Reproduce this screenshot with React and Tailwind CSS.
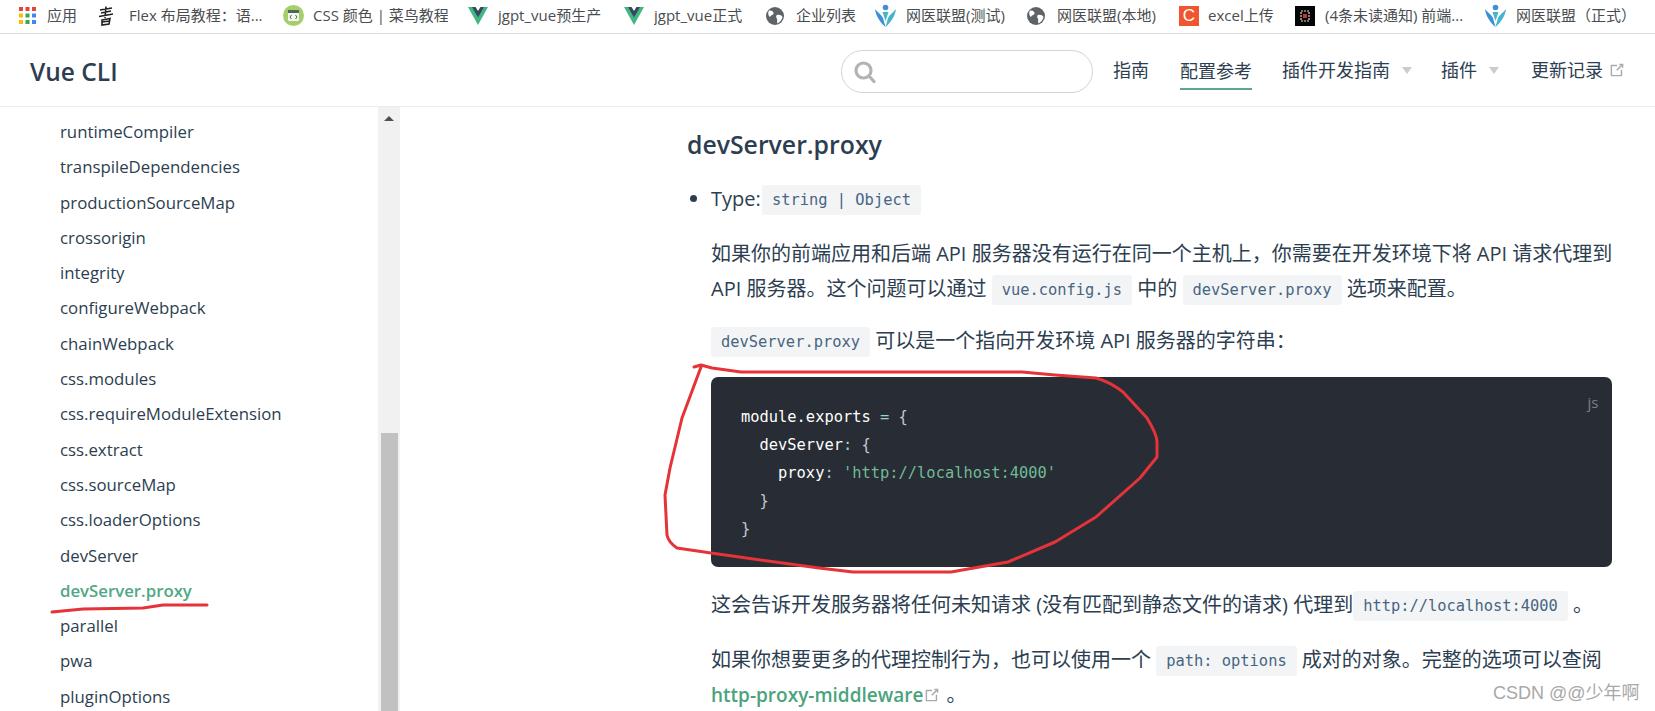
import React from "react";

const sans = "font-['Open_Sans','Noto_Sans_CJK_SC',sans-serif]";

const Grid = () => (
  <svg width="17" height="17" viewBox="0 0 17 17" className="shrink-0">
    {[
      ["#ea4335", 0, 0], ["#ea4335", 6.5, 0], ["#ea4335", 13, 0],
      ["#fbbc05", 0, 6.5], ["#34a853", 6.5, 6.5], ["#4285f4", 13, 6.5],
      ["#fbbc05", 0, 13], ["#34a853", 6.5, 13], ["#4285f4", 13, 13],
    ].map(([c, x, y], i) => <rect key={i} x={x} y={y} width="4" height="4" fill={c} />)}
  </svg>
);
const Shu = () => (
  <svg width="16" height="20" viewBox="0 0 16 20" className="shrink-0" stroke="#222" fill="none" strokeWidth="1.6">
    <path d="M2 4 L14 2 M3 7 L13 5 M1 10.5 L15 8 M8 0.5 L7 12 M4 14 L12 12.5 L11 18 L4 19 Z M4.5 16 L11 15" />
  </svg>
);
const CssIcon = () => (
  <svg width="21" height="21" viewBox="0 0 21 21" className="shrink-0">
    <circle cx="10.5" cy="10.5" r="10.5" fill="#a6cf6b" />
    <rect x="5" y="5" width="11" height="11" rx="1" fill="#f4f7ee" />
    <rect x="5" y="5" width="11" height="3" fill="#4d6b52" />
    <path d="M8.5 10 L7 12 L8.5 14 M12.5 10 L14 12 L12.5 14" stroke="#4d6b52" fill="none" strokeWidth="1" />
  </svg>
);
const VueIcon = () => (
  <svg width="20" height="20" viewBox="0 0 20 20" className="shrink-0">
    <path d="M0 1 H5 L10 9 L15 1 H20 L10 19 Z" fill="#41b883" />
    <path d="M4 1 H7.5 L10 5 L12.5 1 H16 L10 11.5 Z" fill="#35495e" />
  </svg>
);
const Globe = () => (
  <svg width="18" height="18" viewBox="0 0 18 18" className="shrink-0">
    <circle cx="9" cy="9" r="9" fill="#5f6368" />
    <path d="M3 3.5 C6 3 8 5 7.5 7 C6.5 8.5 4.5 8 4 10 C2.5 9 1.5 6 3 3.5 Z M11 8 C13 7.5 16 8.5 16.5 10 C16 13 14 15 11.5 16.5 C10.5 14 12 12.5 10.5 11 C10 10 10 8.5 11 8 Z" fill="#fff" />
  </svg>
);
const Wang = () => (
  <svg width="21" height="24" viewBox="0 0 21 24" className="shrink-0">
    <circle cx="10.5" cy="3.5" r="2.8" fill="#3f8fd8" />
    <path d="M0 5 C3 9 6 10 8 14 L10.5 23 C6 19 1 13 0 5 Z" fill="#3f8fd8" />
    <path d="M21 5 C18 9 15 10 13 14 L10.5 23 C15 19 20 13 21 5 Z" fill="#45b5c9" />
    <path d="M7.5 8 H13.5 L10.5 17 Z" fill="#45b5c9" />
  </svg>
);
const CIcon = () => (
  <div className="w-[20px] h-[20px] bg-[#f1552f] shrink-0 flex items-center justify-center text-white text-[17px] leading-none font-['Liberation_Sans',sans-serif]">C</div>
);
const BlackIcon = () => (
  <svg width="20" height="20" viewBox="0 0 20 20" className="shrink-0">
    <rect width="20" height="20" fill="#050505" />
    <rect x="6" y="5" width="8" height="10" fill="none" stroke="#ddd" strokeWidth="1.2" strokeDasharray="2 1" />
    <rect x="8" y="8" width="4" height="4" fill="#c33" />
  </svg>
);

const bookmarks = [
  [Grid, "应用", "w-[30px]", "ml-[19px]", "gap-[11px]"],
  [Shu, "Flex 布局教程：语...", "w-[134px]", "ml-[21px]", "gap-[15px]"],
  [CssIcon, "CSS 颜色 | 菜鸟教程", "w-[135px]", "ml-[20px]", "gap-[9px]"],
  [VueIcon, "jgpt_vue预生产", "w-[106px]", "ml-[20px]", "gap-[10px]"],
  [VueIcon, "jgpt_vue正式", "w-[91px]", "ml-[20px]", "gap-[10px]"],
  [Globe, "企业列表", "w-[60px]", "ml-[21px]", "gap-[12px]"],
  [Wang, "网医联盟(测试)", "w-[99px]", "ml-[19px]", "gap-[10px]"],
  [Globe, "网医联盟(本地)", "w-[100px]", "ml-[22px]", "gap-[12px]"],
  [CIcon, "excel上传", "w-[66px]", "ml-[22px]", "gap-[9px]"],
  [BlackIcon, "(4条未读通知) 前端...", "w-[146px]", "ml-[21px]", "gap-[10px]"],
  [Wang, "网医联盟（正式）", "w-[120px]", "ml-[14px]", "gap-[10px]"],
];

const sideItems = [
  "runtimeCompiler", "transpileDependencies", "productionSourceMap", "crossorigin", "integrity",
  "configureWebpack", "chainWebpack", "css.modules", "css.requireModuleExtension", "css.extract",
  "css.sourceMap", "css.loaderOptions", "devServer", "devServer.proxy", "parallel", "pwa", "pluginOptions",
];

const External = ({ className }) => (
  <svg viewBox="0 0 100 100" className={className} fill="currentColor">
    <path d="M18.8,85.1h56l0,0c2.2,0,4-1.8,4-4v-32h-8v28h-48v-48h28v-8h-32l0,0c-2.2,0-4,1.8-4,4v56C14.8,83.3,16.6,85.1,18.8,85.1z" />
    <polygon points="45.7,48.7 51.3,54.3 77.2,28.5 77.2,37.2 85.2,37.2 85.2,14.9 62.8,14.9 62.8,22.9 71.5,22.9" />
  </svg>
);
const Caret = () => (
  <span className="inline-block w-0 h-0 border-x-[5px] border-x-transparent border-t-[7px] border-t-[#ccc] ml-[12px]" />
);
const Code = ({ children, className = "" }) => (
  <code className={`inline-block h-[30px] -my-[6px] leading-[30px] px-[10px] rounded-[3px] bg-[#f3f4f5] text-[#476582] text-[15.4px] align-[1px] font-['DejaVu_Sans_Mono',monospace] ${className}`}>
    {children}
  </code>
);

export default function App() {
  return (
    <div className={`relative w-[1655px] h-[711px] overflow-hidden bg-white text-[#2c3e50] ${sans}`}>
      <div className="h-[34px] border-b border-[#dcdcdc] flex items-center text-[15px] text-[#4a4d50] pb-[2px]">
        {bookmarks.map(([Icon, label, w, ml, gap], i) => (
          <div key={i} className={`flex items-center shrink-0 ${ml} ${gap}`}>
            <Icon />
            <span className={`${w} whitespace-nowrap overflow-hidden`}>{label}</span>
          </div>
        ))}
      </div>

      <header className="h-[72px] border-b border-[#eaecef] flex items-center pl-[30px] box-content">
        <div className="text-[24.5px] font-semibold leading-none w-[811px] mt-[4px]">Vue CLI</div>
        <div className="w-[252px] h-[43px] mt-[3px] border border-[#cfd4db] rounded-[22px] flex items-center pl-[11px] text-[#b3b3b3]">
          <svg width="24" height="24" viewBox="0 0 24 24" fill="none" stroke="currentColor" strokeWidth="3.2" strokeLinecap="round">
            <circle cx="10.5" cy="10.5" r="7.5" />
            <path d="M16 16 L21 21.5" />
          </svg>
        </div>
        <nav className="flex items-center text-[18px] ml-[20px] h-[40px]">
          <span>指南</span>
          <span className="ml-[31px] h-[33px] mt-[7px] leading-[28px] border-b-2 border-[#5aa98b]">配置参考</span>
          <span className="ml-[30px]">插件开发指南</span>
          <Caret />
          <span className="ml-[29px]">插件</span>
          <Caret />
          <span className="ml-[32px]">更新记录</span>
          <External className="w-[18px] h-[18px] ml-[5px] text-[#aaaaaa]" />
        </nav>
      </header>

      <div className="flex h-[605px]">
        <aside className="w-[400px] shrink-0 flex overflow-hidden">
          <ul className="w-[378px] pl-[60px] pt-[7px] text-[16.8px] leading-[35.3px] text-[#2c3e50]">
            {sideItems.map((s) => (
              <li key={s} className={s === "devServer.proxy" ? "font-semibold text-[#50a883]" : ""}>{s}</li>
            ))}
          </ul>
          <div className="w-[22px] h-full bg-[#f1f1f1] flex flex-col items-center">
            <span className="mt-[9px] w-0 h-0 border-x-[5px] border-x-transparent border-b-[5px] border-b-[#505050]" />
            <div className="mt-[312px] w-[17px] flex-1 bg-[#c1c1c1]" />
          </div>
        </aside>

        <main className="flex-1 pl-[287px] pr-[43px]">
          <h2 className="text-[24.8px] font-semibold leading-[36px] mt-[19px]">devServer.proxy</h2>
          <ul className="list-disc pl-[24px] mt-[19px] text-[20px] leading-[35px]">
            <li className="h-[35px]">Type: <Code className="-ml-[4px]">string | Object</Code></li>
          </ul>
          <div className="pl-[24px] text-[20px]">
            <p className="mt-[20px] leading-[35px] whitespace-nowrap">
              如果你的前端应用和后端 API 服务器没有运行在同一个主机上，你需要在开发环境下将 API 请求代理到<br />API 服务器。这个问题可以通过 <Code>vue.config.js</Code> 中的 <Code>devServer.proxy</Code> 选项来配置。
            </p>
            <p className="mt-[17px] leading-[35px]">
              <Code>devServer.proxy</Code> 可以是一个指向开发环境 API 服务器的字符串：
            </p>
            <div className="relative mt-[19px] h-[190px] rounded-[7px] bg-[#282c34] pt-[26px] pl-[30px] text-[15.4px] leading-[28px] font-['DejaVu_Sans_Mono',monospace] text-white">
              <span className="absolute top-[15px] right-[14px] text-[15px] leading-[20px] text-[#7a7f87] font-['Open_Sans',sans-serif]">js</span>
              <pre className="font-['DejaVu_Sans_Mono',monospace]">
                {"module.exports "}<span className="text-[#9fd6c0]">=</span><span className="text-[#c5c8ce]">{" {"}</span>{"\n"}
                {"  devServer"}<span className="text-[#9fd6c0]">:</span><span className="text-[#c5c8ce]">{" {"}</span>{"\n"}
                {"    proxy"}<span className="text-[#9fd6c0]">:</span>{" "}<span className="text-[#6fbb97]">'http://localhost:4000'</span>{"\n"}
                <span className="text-[#c5c8ce]">{"  }"}</span>{"\n"}
                <span className="text-[#c5c8ce]">{"}"}</span>
              </pre>
            </div>
            <p className="mt-[20px] leading-[35px] whitespace-nowrap">
              这会告诉开发服务器将任何未知请求 (没有匹配到静态文件的请求) 代理到<Code>http://localhost:4000</Code> 。
            </p>
            <p className="mt-[20px] leading-[35px]">
              如果你想要更多的代理控制行为，也可以使用一个 <Code>path: options</Code> 成对的对象。完整的选项可以查阅<br />
              <span className="font-semibold text-[19px] text-[#4ba37e]">http-proxy-middleware</span>
              <External className="inline-block w-[18px] h-[18px] align-[-2px] text-[#aaaaaa]" /> 。
            </p>
          </div>
        </main>
      </div>

      <div className="absolute left-[1493px] top-[681px] text-[18px] leading-[24px] text-[#a8a8a8] whitespace-nowrap font-['Liberation_Sans','Noto_Sans_CJK_SC',sans-serif]">
        CSDN @@少年啊
      </div>

      <svg className="absolute left-0 top-0 pointer-events-none" width="1655" height="711" fill="none" stroke="#e5333a" strokeWidth="3" strokeLinejoin="round" strokeLinecap="round">
        <path d="M52 612 L83 609 L143 608 L163 605 L207 605" />
        <path d="M694 367 L701 365 L712 368 L741 372 L886 372 L1022 372 L1055 375 L1096 378 C1110 382 1118 388 1123 392 L1147 418 C1153 428 1157 436 1157 442 L1157 457 L1140 478 L1096 517 L1055 542 L1008 562 L951 572 L853 572 L819 568 L768 561 L711 553 L677 548 C671 544 668 540 667 535 L665 495 L670 468 L682 418 L701 367" />
      </svg>
    </div>
  );
}
